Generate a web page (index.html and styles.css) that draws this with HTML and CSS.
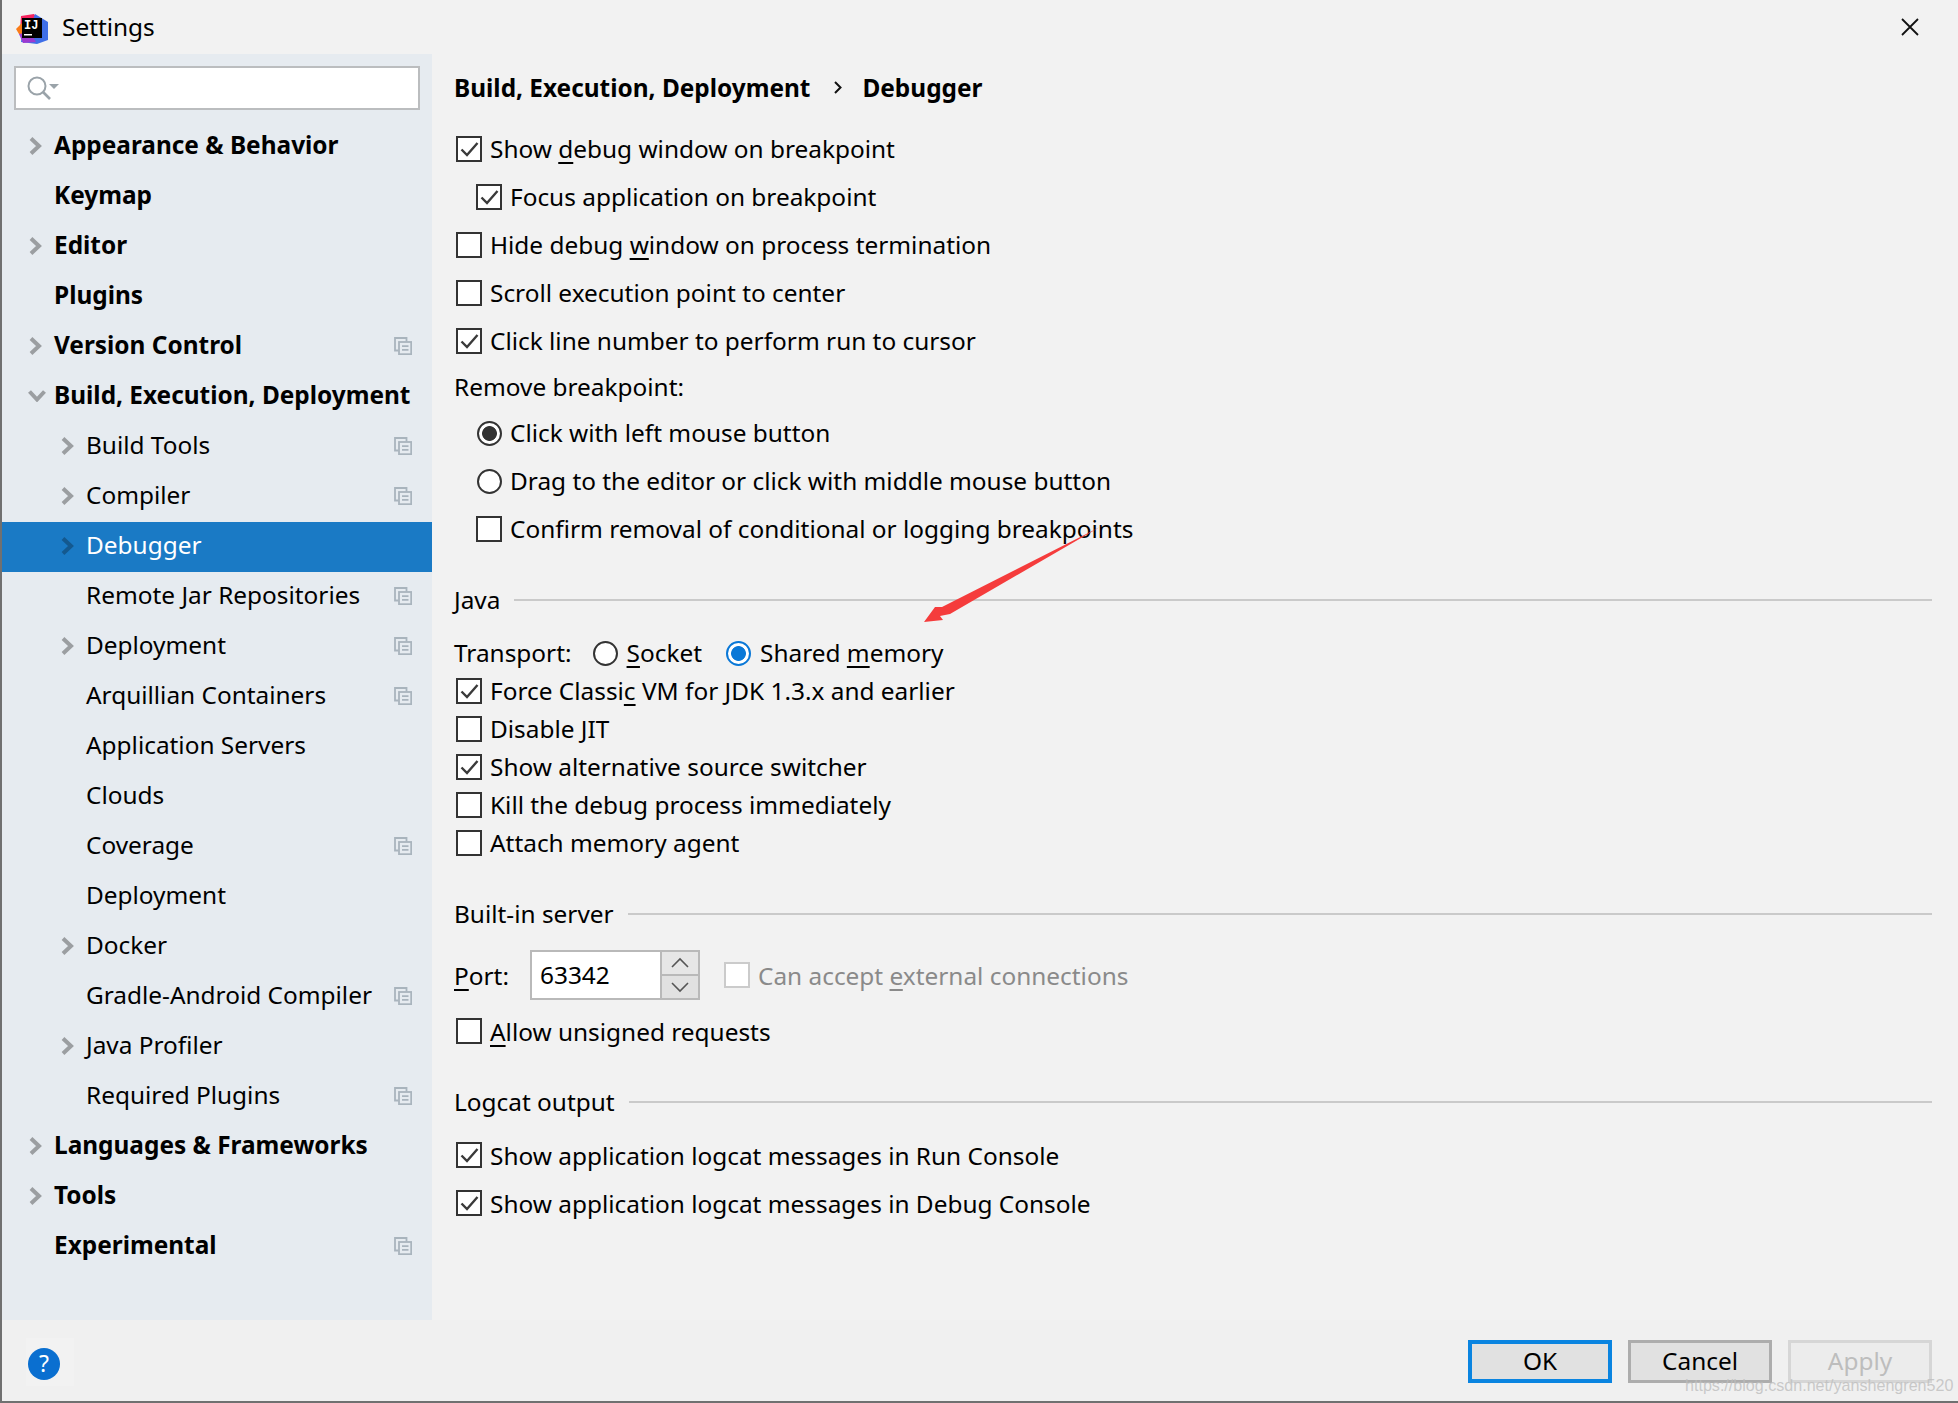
FILE: index.html
```html
<!DOCTYPE html>
<html lang="en">
<head>
<meta charset="utf-8">
<title>Settings</title>
<link rel="stylesheet" href="styles.css">
</head>
<body>
<svg class="defs" width="0" height="0" aria-hidden="true">
  <symbol id="chev" viewBox="0 0 14 18"><path d="M2 1.5 L10 9 L2 16.5" fill="none" stroke="currentColor" stroke-width="4"/></symbol>
  <symbol id="copy" viewBox="0 0 18 18"><path d="M4.5 13.5H1V1H12.5V4.5" fill="none" stroke="#a9b4bd" stroke-width="1.8"/><rect x="5" y="5" width="12.2" height="12.2" fill="none" stroke="#a9b4bd" stroke-width="1.8"/><path d="M8 9.2H14.5M8 12.8H14.5" stroke="#a9b4bd" stroke-width="1.8"/></symbol>
  <symbol id="tick" viewBox="0 0 22 22"><path d="M3.5 11.5 L9 17 L19.5 5" fill="none" stroke="#3a3a3a" stroke-width="2.4"/></symbol>
</svg>
<div class="window">
  <header class="titlebar">
    <svg class="logo" width="34" height="34" viewBox="0 0 34 34">
      <polygon points="5,4 18,2 22,8 20,30 6,28 4,18" fill="#f5245f"/>
      <polygon points="0,17 8,9 10,24 3,22" fill="#fa7b17"/>
      <polygon points="19,2 32,10 32,28 21,32 5,30 6,22 14,16" fill="#3f6fe8"/>
      <polygon points="3,22 14,20 20,30 7,31" fill="#9c3ad0"/>
      <rect x="6" y="6" width="20" height="20" fill="#000"/>
      <text x="8" y="17" class="logo-text">IJ</text>
      <rect x="8" y="22" width="8" height="1.5" fill="#fff"/>
    </svg>
    <span class="title-text">Settings</span>
    <svg class="close" width="20" height="20" viewBox="0 0 20 20"><path d="M2 2 L18 18 M18 2 L2 18" stroke="#111" stroke-width="1.8"/></svg>
  </header>
  <div class="body">
    <aside class="sidebar">
      <div class="search">
        <svg width="34" height="26" viewBox="0 0 34 26"><circle cx="11" cy="11" r="8.5" fill="none" stroke="#9aa3a9" stroke-width="2"/><path d="M17 17 L24 24" stroke="#9aa3a9" stroke-width="2.6"/><path d="M23 9 H33 L28 14 Z" fill="#9aa3a9"/></svg>
      </div>
      <nav class="tree">
        <div class="row top"><svg class="chev"><use href="#chev"/></svg><span class="label">Appearance &amp; Behavior</span></div>
        <div class="row top"><span class="nochev"></span><span class="label">Keymap</span></div>
        <div class="row top"><svg class="chev"><use href="#chev"/></svg><span class="label">Editor</span></div>
        <div class="row top"><span class="nochev"></span><span class="label">Plugins</span></div>
        <div class="row top"><svg class="chev"><use href="#chev"/></svg><span class="label">Version Control</span><svg class="copy"><use href="#copy"/></svg></div>
        <div class="row top"><svg class="chev open" viewBox="0 0 18 12"><path d="M1.5 1.5 L9 9.5 L16.5 1.5" fill="none" stroke="currentColor" stroke-width="4"/></svg><span class="label">Build, Execution, Deployment</span></div>
        <div class="row sub"><svg class="chev"><use href="#chev"/></svg><span class="label">Build Tools</span><svg class="copy"><use href="#copy"/></svg></div>
        <div class="row sub"><svg class="chev"><use href="#chev"/></svg><span class="label">Compiler</span><svg class="copy"><use href="#copy"/></svg></div>
        <div class="row sub selected"><svg class="chev"><use href="#chev"/></svg><span class="label">Debugger</span></div>
        <div class="row sub"><span class="nochev"></span><span class="label">Remote Jar Repositories</span><svg class="copy"><use href="#copy"/></svg></div>
        <div class="row sub"><svg class="chev"><use href="#chev"/></svg><span class="label">Deployment</span><svg class="copy"><use href="#copy"/></svg></div>
        <div class="row sub"><span class="nochev"></span><span class="label">Arquillian Containers</span><svg class="copy"><use href="#copy"/></svg></div>
        <div class="row sub"><span class="nochev"></span><span class="label">Application Servers</span></div>
        <div class="row sub"><span class="nochev"></span><span class="label">Clouds</span></div>
        <div class="row sub"><span class="nochev"></span><span class="label">Coverage</span><svg class="copy"><use href="#copy"/></svg></div>
        <div class="row sub"><span class="nochev"></span><span class="label">Deployment</span></div>
        <div class="row sub"><svg class="chev"><use href="#chev"/></svg><span class="label">Docker</span></div>
        <div class="row sub"><span class="nochev"></span><span class="label">Gradle-Android Compiler</span><svg class="copy"><use href="#copy"/></svg></div>
        <div class="row sub"><svg class="chev"><use href="#chev"/></svg><span class="label">Java Profiler</span></div>
        <div class="row sub"><span class="nochev"></span><span class="label">Required Plugins</span><svg class="copy"><use href="#copy"/></svg></div>
        <div class="row top"><svg class="chev"><use href="#chev"/></svg><span class="label">Languages &amp; Frameworks</span></div>
        <div class="row top"><svg class="chev"><use href="#chev"/></svg><span class="label">Tools</span></div>
        <div class="row top"><span class="nochev"></span><span class="label">Experimental</span><svg class="copy"><use href="#copy"/></svg></div>
      </nav>
    </aside>
    <main class="content">
      <div class="crumbs"><span>Build, Execution, Deployment</span><svg class="sep" width="8" height="13" viewBox="0 0 8 13"><path d="M1 1 L6.5 6.5 L1 12" fill="none" stroke="#111" stroke-width="2"/></svg><span>Debugger</span></div>

      <div class="line tall"><span class="box on"><svg><use href="#tick"/></svg></span>Show <u>d</u>ebug window on breakpoint</div>
      <div class="line tall ind"><span class="box on"><svg><use href="#tick"/></svg></span>Focus application on breakpoint</div>
      <div class="line tall"><span class="box"></span>Hide debug <u>w</u>indow on process termination</div>
      <div class="line tall"><span class="box"></span>Scroll execution point to center</div>
      <div class="line tall"><span class="box on"><svg><use href="#tick"/></svg></span>Click line number to perform run to cursor</div>
      <div class="line caption">Remove breakpoint:</div>
      <div class="line tall ind"><span class="radio dark"></span>Click with left mouse button</div>
      <div class="line tall ind"><span class="radio"></span>Drag to the editor or click with middle mouse button</div>
      <div class="line tall ind"><span class="box"></span>Confirm removal of conditional or logging breakpoints</div>

      <div class="group g-java"><span>Java</span><i></i></div>
      <div class="line short transport">
        <span class="t-label">Transport:</span>
        <span class="radio"></span><span class="t-opt"><u>S</u>ocket</span>
        <span class="radio blue"></span><span>Shared <u>m</u>emory</span>
      </div>
      <div class="line short"><span class="box on"><svg><use href="#tick"/></svg></span>Force Classi<u>c</u> VM for JDK 1.3.x and earlier</div>
      <div class="line short"><span class="box"></span>Disable JIT</div>
      <div class="line short"><span class="box on"><svg><use href="#tick"/></svg></span>Show alternative source switcher</div>
      <div class="line short"><span class="box"></span>Kill the debug process immediately</div>
      <div class="line short"><span class="box"></span>Attach memory agent</div>

      <div class="group g-server"><span>Built-in server</span><i></i></div>
      <div class="port-row">
        <span class="port-label"><u>P</u>ort:</span>
        <div class="port-input">
          <span class="port-value">63342</span>
          <div class="spin">
            <span class="up"><svg width="20" height="12" viewBox="0 0 20 12"><path d="M2 10 L10 2 L18 10" fill="none" stroke="#555" stroke-width="1.6"/></svg></span>
            <span class="down"><svg width="20" height="12" viewBox="0 0 20 12"><path d="M2 2 L10 10 L18 2" fill="none" stroke="#555" stroke-width="1.6"/></svg></span>
          </div>
        </div>
        <span class="box off"></span><span class="muted">Can accept <u>e</u>xternal connections</span>
      </div>
      <div class="line tall allow"><span class="box"></span><u>A</u>llow unsigned requests</div>

      <div class="group g-logcat"><span>Logcat output</span><i></i></div>
      <div class="line tall"><span class="box on"><svg><use href="#tick"/></svg></span>Show application logcat messages in Run Console</div>
      <div class="line tall"><span class="box on"><svg><use href="#tick"/></svg></span>Show application logcat messages in Debug Console</div>
    </main>
  </div>
  <footer class="footer">
    <div class="help"><span class="help-dot">?</span></div>
    <div class="buttons">
      <button class="btn primary">OK</button>
      <button class="btn">Cancel</button>
      <button class="btn disabled">Apply</button>
    </div>
  </footer>
  <svg class="arrow" width="182" height="100" viewBox="0 0 182 100"><polygon points="180,3 22,83 15,83 4,98 23,96 20,92 30,90" fill="#f53c3c"/></svg>
  <span class="watermark">https://blog.csdn.net/yanshengren520</span>
</div>
</body>
</html>
```
FILE: styles.css
```css
* { box-sizing: border-box; }
html, body { margin: 0; padding: 0; }
body {
  width: 1958px;
  height: 1403px;
  overflow: hidden;
  background: #f2f2f2;
  font-family: "Noto Sans", "Open Sans", sans-serif;
  font-size: 24.4px;
  color: #000;
}
.defs { position: absolute; }
.window {
  position: relative;
  width: 1958px;
  height: 1403px;
  display: flex;
  flex-direction: column;
  border-left: 2px solid #707070;
  border-bottom: 2px solid #707070;
}
u { text-underline-offset: 4px; text-decoration-thickness: 2px; }

.titlebar { height: 54px; flex: none; display: flex; align-items: center; padding-left: 14px; background: #f2f2f2; }
.logo { flex: none; margin-right: 12px; margin-top: 4px; }
.logo-text { font-family: "Liberation Mono", monospace; font-weight: 700; font-size: 12px; fill: #fff; }
.title-text { margin-top: -2px; }
.close { margin-left: auto; margin-right: 38px; }

.body { flex: 1; display: flex; min-height: 0; }
.sidebar { width: 430px; flex: none; background: #e6ebf0; padding-top: 12px; }
.search {
  width: 406px; height: 44px; margin-left: 12px;
  background: #fff; border: 2px solid #bbbdbf;
  display: flex; align-items: center; padding-left: 10px;
}
.tree { margin-top: 12px; }
.row { height: 50px; display: flex; align-items: center; padding-right: 20px; }
.row.top { padding-left: 27px; font-weight: 700; }
.row.sub { padding-left: 59px; }
.chev { width: 14px; height: 18px; color: #9b9ea1; flex: none; margin-right: 11px; margin-top: -2px; }
.chev.open { width: 18px; height: 12px; margin-left: -1px; margin-right: 8px; }
.nochev { width: 14px; flex: none; margin-right: 11px; }
.label { margin-top: -5px; white-space: nowrap; }
.copy { width: 18px; height: 18px; margin-left: auto; margin-top: -2px; flex: none; }
.selected { background: #1a7ac5; color: #fff; }
.selected .chev { color: #14598f; }

.content { flex: 1; padding-left: 22px; padding-right: 26px; min-width: 0; }
.crumbs { height: 66px; margin-bottom: 5px; display: flex; align-items: center; font-weight: 700; }
.sep { flex: none; margin: 0 20px 0 24px; }

.line { display: flex; align-items: center; white-space: pre; padding-bottom: 2px; }
.line .box, .line .radio { margin-top: 2px; }
.g-server ~ .line { padding-bottom: 0; }
.g-server ~ .line .box { margin-top: 0; }
.tall { height: 48px; padding-left: 2px; }
.short { height: 38px; padding-left: 2px; }
.ind { padding-left: 22px; }
.caption { height: 44px; }
.box {
  width: 26px; height: 26px; flex: none; margin-right: 8px;
  background: #fff; border: 2px solid #333; display: inline-flex;
}
.box svg { width: 22px; height: 22px; }
.box.off { border-color: #cbcbcb; margin-left: 24px; margin-right: 8px; }
.radio {
  width: 25px; height: 25px; flex: none; margin-right: 8px; border-radius: 50%;
  background: #fff; border: 2px solid #333; margin-left: 1px;
}
.radio.dark { background: radial-gradient(circle, #333 0 7px, #fff 7.8px); }
.radio.blue { border-color: #0a78d7; background: radial-gradient(circle, #0a78d7 0 7px, #fff 7.8px); }

.group { height: 40px; display: flex; align-items: center; }
.group span { margin-right: 14px; white-space: nowrap; }
.group i { flex: 1; height: 2px; background: #cacaca; margin-top: 1px; }
.g-java { margin-top: 26px; margin-bottom: 15px; }
.g-server { margin-top: 31px; margin-bottom: 17px; }
.g-logcat { margin-top: 26px; margin-bottom: 10px; }

.transport { padding-left: 0; }
.transport .radio { margin-right: 9px; }
.t-label { margin-right: 20px; }
.t-opt { margin-right: 23px; }

.port-row { height: 50px; display: flex; align-items: center; white-space: pre; }
.port-label { width: 76px; flex: none; }
.port-input { width: 170px; height: 50px; flex: none; display: flex; border: 2px solid #b9b9b9; background: #fff; }
.port-value { flex: 1; padding-left: 8px; line-height: 46px; }
.spin { width: 38px; flex: none; display: flex; flex-direction: column; border-left: 2px solid #b9b9b9; }
.spin span { flex: 1; display: flex; align-items: center; justify-content: center; background: #e1e1e1; }
.spin .up { background: #e6e6e6; border-bottom: 2px solid #b9b9b9; }
.muted { color: #8a8a8a; }
.allow { margin-top: 7px; }

.footer { height: 81px; flex: none; display: flex; align-items: flex-start; background: #f0f0f0; }
.help { width: 48px; height: 48px; margin: 18px 0 0 24px; background: #f2f2f2; display: flex; align-items: center; padding: 4px 0 0 2px; flex: none; }
.help-dot { width: 32px; height: 32px; border-radius: 50%; background: #0a6fd0; color: #fff; text-align: center; line-height: 30px; font-size: 23px; }
.buttons { margin-left: auto; display: flex; gap: 16px; margin-right: 26px; margin-top: 20px; }
.btn {
  width: 144px; height: 43px; padding: 0; font: inherit; color: #000;
  background: #e1e1e1; border: 3px solid #adadad; border-radius: 0; line-height: 1;
}
.btn.primary { border: 4px solid #0a84e0; }
.btn.disabled { color: #bdbdbd; background: #ececec; border-color: #d6d6d6; }

.arrow { position: absolute; left: 918px; top: 524px; }
.watermark {
  position: absolute; left: 1683px; top: 1376px;
  font-family: "Liberation Sans", sans-serif; font-size: 16.1px;
  color: rgba(190,190,190,.8); white-space: nowrap;
}
```
